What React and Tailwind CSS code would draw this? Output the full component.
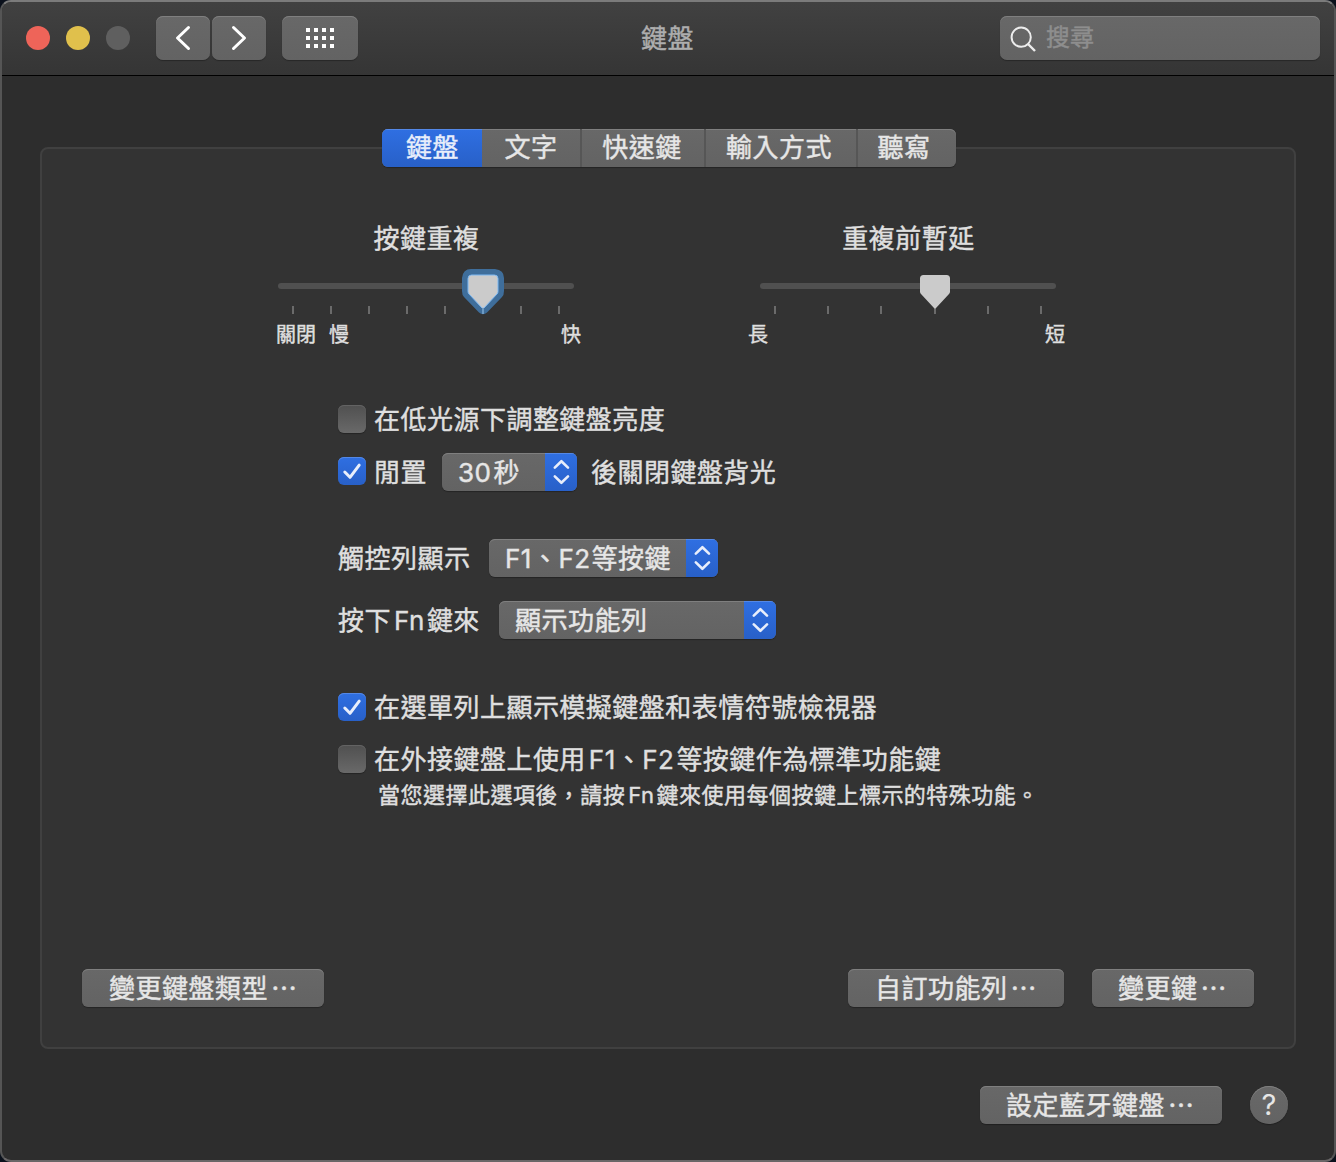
import React from "react";

// Latin run set in Inter with the small gaps that separate it from Chinese text
const L = ({ children, className = "" }) => (
  <span className={`font-['Inter','Noto_Sans_CJK_TC',sans-serif] leading-[0] ${className}`}>{children}</span>
);

const raised =
  "bg-linear-to-b from-[#686868] to-[#636363] shadow-[inset_0_1px_0_#7f7f7f,0_1px_1px_rgba(0,0,0,0.3)]";
const blue =
  "bg-linear-to-b from-[#2f6fe2] to-[#2860c8] shadow-[inset_0_1px_0_#5488e6]";

const Button = ({ className, children }) => (
  <button className={`flex h-[38px] items-center rounded-[6px] ${raised} ${className}`}>
    <span className="relative -top-[1.5px] flex">
      {children}
      <span className="ml-[3px]">…</span>
    </span>
  </button>
);

const Checkbox = ({ checked, className = "" }) => (
  <span
    className={`flex size-7 shrink-0 items-center justify-center rounded-[6px] ${className} ${
      checked
        ? `${blue}`
        : "bg-linear-to-b from-[#505050] to-[#696969] shadow-[inset_0_1px_0_#636363,0_1px_1px_rgba(0,0,0,0.3)]"
    }`}
  >
    {checked && (
      <svg width="28" height="28" viewBox="0 0 28 28" fill="none" stroke="#e8eefb" strokeWidth="3" strokeLinecap="round" strokeLinejoin="round">
        <path d="M6.8 15 L12 20.3 L21.2 8.2" />
      </svg>
    )}
  </span>
);

const Select = ({ className, children }) => (
  <span className={`flex h-[38px] shrink-0 items-center justify-between overflow-hidden rounded-[6px] pl-4 text-[#e6e6e6] ${raised} ${className}`}>
    <span className="relative -top-[1.5px] leading-[36px] whitespace-nowrap">{children}</span>
    <span className={`flex h-full w-8 items-center justify-center ${blue}`}>
      <svg width="32" height="38" viewBox="0 0 32 38" fill="none" stroke="#e8eefb" strokeWidth="2.6" strokeLinecap="round" strokeLinejoin="round">
        <path d="M9.8 14.6 L16.4 8.2 L23 14.6 M9.8 23.4 L16.4 29.8 L23 23.4" />
      </svg>
    </span>
  </span>
);

const Row = ({ className = "", children }) => (
  <div className={`flex h-[38px] items-center whitespace-nowrap ${className}`}>{children}</div>
);

const Label = ({ className = "", children }) => (
  <span className={`relative -top-[1px] ${className}`}>{children}</span>
);

const Slider = ({ title, ticks, focused, thumb, children }) => (
  <div className="w-[296px]">
    <div className="flex h-[38px] items-center justify-center whitespace-nowrap">
      <Label className="left-[0.5px]">{title}</Label>
    </div>
    <div className="relative mt-[26px] h-[6px] rounded-full bg-[#505050]">
      <svg className={`absolute -top-[16px] ${thumb}`} width="46" height="50" viewBox="0 0 46 50">
        {focused && (
          <path
            d="M11 2 H35 Q44 3 44 11 V24 Q44 28 42 30 L27 45.5 Q23 49 19 45.5 L4 30 Q2 28 2 24 V11 Q3 2 11 2Z"
            fill="#3f6e9b"
          />
        )}
        <path
          d="M11.5 8 H34.5 Q38 8 38 11.5 V24.5 Q38 26 37 27 L24 41 Q23 42 22 41 L9 27 Q8 26 8 24.5 V11.5 Q8 8 11.5 8Z"
          fill="#cbcbcb"
          stroke={focused ? "#7db8f2" : "none"}
          strokeWidth="1"
        />
        {focused && <path d="M23 41 V47" stroke="#6d9ac4" strokeWidth="2" />}
      </svg>
    </div>
    <div className="mx-[14px] mt-[17px] flex h-2 justify-between">
      {Array.from({ length: ticks }, (_, i) => (
        <i key={i} className="w-[2px] bg-[#6b6b6b]" />
      ))}
    </div>
    <div className="mt-[8px] flex h-6 items-center whitespace-nowrap text-[20px] tracking-normal">{children}</div>
  </div>
);

const Tab = ({ className, children }) => (
  <span className={`flex h-full items-center justify-center ${className}`}>
    <span className="relative -top-[2px]">{children}</span>
  </span>
);

export default function App() {
  return (
    <div
      lang="zh-Hant"
      className="h-[1162px] w-[1336px] bg-[#0b111c] font-['Noto_Sans_CJK_TC',sans-serif] text-[26px] leading-none tracking-[0.48px] text-[#dfdfdf] [-webkit-text-stroke:0.45px]"
    >
      <div className="flex h-full flex-col overflow-hidden rounded-[11px] border-2 border-t-[#7b7b7b] border-r-[#555555] border-b-[#696667] border-l-[#555555] bg-[#2d2d2d]">
        <header className="flex h-[74px] shrink-0 items-start border-b border-black bg-linear-to-b from-[#414141] to-[#353535] pt-[14px] pr-[14px] pl-6">
          <div className="flex h-11 items-center gap-4">
            <i className="size-6 rounded-full bg-[#ee6459]" />
            <i className="size-6 rounded-full bg-[#e0c04c]" />
            <i className="size-6 rounded-full bg-[#5f5f5f]" />
          </div>
          <div className="ml-[26px] flex gap-[2px]">
            {["M32.5 11.5 L21.5 22 L32.5 32.5", "M21.5 11.5 L32.5 22 L21.5 32.5"].map((d) => (
              <button key={d} className={`h-11 w-[54px] rounded-[7px] ${raised}`}>
                <svg width="54" height="44" viewBox="0 0 54 44" fill="none" stroke="#fff" strokeWidth="3" strokeLinecap="round" strokeLinejoin="round">
                  <path d={d} />
                </svg>
              </button>
            ))}
          </div>
          <button className={`ml-4 grid h-11 w-[76px] grid-cols-[repeat(4,4px)] content-center justify-center gap-1 rounded-[7px] ${raised}`}>
            {Array.from({ length: 12 }, (_, i) => (
              <i key={i} className="size-1 bg-white" />
            ))}
          </button>
          <div className="ml-[283px] flex h-11 items-center text-[#aeaeae]">
            <Label>鍵盤</Label>
          </div>
          <div className={`ml-auto flex h-11 w-[320px] items-center rounded-[7px] ${raised}`}>
            <svg className="shrink-0" width="46" height="44" viewBox="0 0 46 44" fill="none" stroke="#ececec" strokeWidth="2">
              <circle cx="21.2" cy="21.2" r="9.6" />
              <path d="M28 28 L35 35" strokeWidth="2.4" />
            </svg>
            <span className="relative -top-[2px] text-[24px] tracking-normal text-[#8e8e8e]">搜尋</span>
          </div>
        </header>

        <main className="flex flex-col pt-[53px]">
          <nav className={`z-10 ml-[380px] flex h-[38px] w-[574px] overflow-hidden rounded-[6px] text-[#e6e6e6] ${raised}`}>
            <Tab className={`w-[100px] pl-px text-[#e8eefb] ${blue}`}>鍵盤</Tab>
            <Tab className="w-[98px]">文字</Tab>
            <Tab className="w-[124px] border-l-2 border-[#565656] pr-[2px]">快速鍵</Tab>
            <Tab className="w-[152px] border-l-2 border-[#565656] pr-[4px]">輸入方式</Tab>
            <Tab className="w-[100px] border-l-2 border-[#565656] pr-[6px]">聽寫</Tab>
          </nav>

          <section className="-mt-5 ml-[38px] flex h-[902px] w-[1256px] flex-col rounded-[8px] border-2 border-[#404040] bg-[#333333] pt-[70px]">
            <div className="ml-[236px] flex gap-[186px]">
              <Slider title="按鍵重複" ticks={8} focused thumb="left-[182px]">
                <span className="-ml-[2px]">關閉</span>
                <span className="ml-[13px]">慢</span>
                <span className="-mr-[7px] ml-auto">快</span>
              </Slider>
              <Slider title="重複前暫延" ticks={6} thumb="left-[152px]">
                <span className="-ml-[12px]">長</span>
                <span className="-mr-[9px] ml-auto">短</span>
              </Slider>
            </div>

            <div className="mt-[54px] ml-[296px] flex flex-col">
              <Row>
                <Checkbox />
                <Label className="ml-2">在低光源下調整鍵盤亮度</Label>
              </Row>
              <Row className="mt-[15px]">
                <Checkbox checked className="-mt-[2px]" />
                <Label className="ml-2">閒置</Label>
                <Select className="ml-[15px] w-[135px]">
                  <L className="mr-[2px]">30</L>秒
                </Select>
                <Label className="ml-[14px]">後關閉鍵盤背光</Label>
              </Row>
              <Row className="mt-12">
                <Label className="w-[151px]">觸控列顯示</Label>
                <Select className="w-[229px]">
                  <L>F1</L>、<L className="mr-px">F2</L>等按鍵
                </Select>
              </Row>
              <Row className="mt-6">
                <Label className="w-[161px]">
                  按下<L className="mr-[2px] ml-[3px]">Fn</L>鍵來
                </Label>
                <Select className="w-[277px]">顯示功能列</Select>
              </Row>
              <Row className="mt-[49px]">
                <Checkbox checked />
                <Label className="ml-2">在選單列上顯示模擬鍵盤和表情符號檢視器</Label>
              </Row>
              <Row className="mt-[14px]">
                <Checkbox />
                <Label className="ml-2">
                  在外接鍵盤上使用<L className="ml-[3px]">F1</L>、<L className="mr-[2px]">F2</L>等按鍵作為標準功能鍵
                </Label>
              </Row>
              <p className="mt-[3px] ml-10 text-[22px] leading-6 whitespace-nowrap tracking-[0.48px]">
                當您選擇此選項後，請按<L className="mr-[2px] ml-[3px]">Fn</L>鍵來使用每個按鍵上標示的特殊功能。
              </p>
            </div>

            <div className="mt-auto mr-10 mb-[40px] ml-10 flex text-[#e6e6e6]">
              <Button className="w-[242px] pl-[27px]">變更鍵盤類型</Button>
              <Button className="ml-auto w-[216px] pl-[27px]">自訂功能列</Button>
              <Button className="ml-7 w-[162px] pl-[26px]">變更鍵</Button>
            </div>
          </section>

          <footer className="mt-[37px] mr-[46px] flex justify-end gap-7 text-[#e6e6e6]">
            <Button className="w-[242px] pl-[26px]">設定藍牙鍵盤</Button>
            <button className={`flex size-[38px] items-center justify-center rounded-full ${raised}`}>
              <L className="text-[29px] tracking-normal [-webkit-text-stroke:0px]">?</L>
            </button>
          </footer>
        </main>
      </div>
    </div>
  );
}
